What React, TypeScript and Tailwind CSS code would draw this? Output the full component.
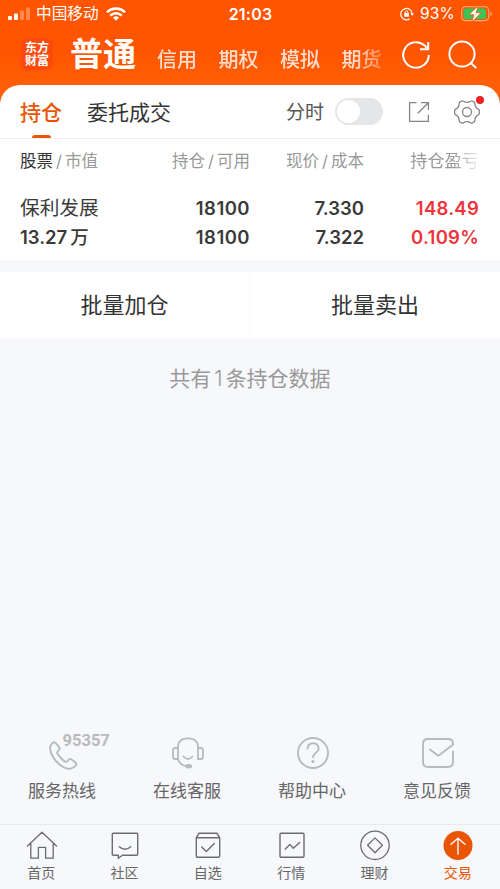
import React, { useState } from 'react';
import { clsx } from 'clsx';

interface IconProps {
  className?: string;
}

interface Holding {
  name: string;
  marketValue: string;
  unit: string;
  amount: string;
  available: string;
  price: string;
  cost: string;
  profit: string;
  profitRate: string;
}

const holdings: Holding[] = [
  {
    name: '保利发展',
    marketValue: '13.27',
    unit: '万',
    amount: '18100',
    available: '18100',
    price: '7.330',
    cost: '7.322',
    profit: '148.49',
    profitRate: '0.109%',
  },
];

const SignalIcon: React.FC<IconProps> = ({ className }) => (
  <svg className={className} viewBox="0 0 23 14" fill="#fff">
    <rect x="0" y="9" width="4" height="4" rx="1" />
    <rect x="6" y="6.500" width="4" height="6.500" rx="1" />
    <rect x="12" y="3.500" width="4" height="9.500" rx="1" opacity="0.3" />
    <rect x="18" y="0.500" width="4" height="12.500" rx="1" opacity="0.3" />
  </svg>
);

const WifiIcon: React.FC<IconProps> = ({ className }) => (
  <svg className={className} viewBox="0 0 20 14" fill="none" stroke="#fff" strokeWidth="2.6">
    <path d="M1 5.300a12.800 12.800 0 0 1 18 0" />
    <path d="M4.300 8.700a8 8 0 0 1 11.400 0" />
    <path d="M10 13.800l-3-3a4.300 4.300 0 0 1 6 0z" fill="#fff" stroke="none" />
  </svg>
);

const RotationLockIcon: React.FC<IconProps> = ({ className }) => (
  <svg className={className} viewBox="0 0 14 14" fill="none" stroke="#fff" strokeWidth="1.2">
    <path d="M9.800 11.800A5.700 5.700 0 1 1 12.200 7" />
    <path d="M10.300 6.300h3.600l-1.800 2.600z" fill="#fff" stroke="none" />
    <rect x="4.300" y="6" width="4.600" height="3.800" rx="0.6" fill="#fff" stroke="none" />
    <path d="M5.300 6.400V5.200a1.300 1.300 0 0 1 2.600 0v1.200" strokeWidth="1" />
  </svg>
);

const BatteryIcon: React.FC<IconProps> = ({ className }) => (
  <svg className={className} viewBox="0 0 32 18">
    <rect x="0.700" y="1.700" width="27" height="14" rx="4" fill="none" stroke="#fff" strokeOpacity="0.45" strokeWidth="1.2" />
    <path d="M29.300 6.500c2 .8 2 3.700 0 4.500z" fill="#fff" fillOpacity="0.5" />
    <rect x="2.500" y="3.500" width="22.500" height="10.500" rx="2.300" fill="#35c759" />
    <path d="M17.300.5L8 9.700h5L10.800 17.300l9.300-9.500h-5z" fill="#fff" stroke="#ff5a00" strokeWidth="0.8" />
  </svg>
);

const RefreshIcon: React.FC<IconProps> = ({ className }) => (
  <svg className={className} viewBox="0 0 30 30" fill="none" stroke="#fff" strokeWidth="2">
    <path d="M27.800 15a12.800 12.800 0 1 1-4.200-9.500l3 3" />
    <path d="M27.200 2v7.300h-8.200" />
  </svg>
);

const SearchIcon: React.FC<IconProps> = ({ className }) => (
  <svg className={className} viewBox="0 0 30 30" fill="none" stroke="#fff" strokeWidth="2">
    <circle cx="14" cy="14" r="12.600" />
    <path d="M22.800 23l5.400 5" />
  </svg>
);

const ShareIcon: React.FC<IconProps> = ({ className }) => (
  <svg className={className} viewBox="0 0 22 22" fill="none" stroke="#858585" strokeWidth="1.300">
    <path d="M8.500 1.600H1.600v18.800h18.800v-7" />
    <path d="M9.800 12.200L20.300 1.700M13 1.600h7.400v7.400" />
  </svg>
);

const GearIcon: React.FC<IconProps> = ({ className }) => (
  <svg className={className} viewBox="0 0 26 26" fill="none" stroke="#858585" strokeWidth="1.300" strokeLinejoin="round">
    <path d="M7.600 2q1-.5 1.800.2 1.600 1.100 3.600 1.100t3.600-1.100q.8-.7 1.800-.2l1.500.9q.9.600.9 1.600.1 1.900 1 3.400t2.500 2.300q1 .5 1 1.500v2.600q0 1-1 1.500-1.600.8-2.500 2.300t-1 3.400q0 1-.9 1.600l-1.500.9q-1 .5-1.800-.2-1.600-1.100-3.600-1.100t-3.600 1.100q-.8.7-1.800.2l-1.500-.9q-.9-.6-.9-1.600-.1-1.900-1-3.400t-2.500-2.300q-1-.5-1-1.500v-2.600q0-1 1-1.500 1.600-.8 2.500-2.300t1-3.400q0-1 .9-1.600z" />
    <circle cx="13" cy="13" r="4.500" />
  </svg>
);

const PhoneIcon: React.FC<IconProps> = ({ className }) => (
  <svg className={className} viewBox="0 0 36 36" fill="none" stroke="#b9babc" strokeWidth="1.900" strokeLinejoin="round">
    <path d="M9.300 7.200c-1.700-.1-4.300 3.300-4.200 5.700C5.600 22 14.500 32.300 23.400 33.800c3.300.4 7.900-2.800 8.300-4.700.1-.6-5.400-5.300-6.500-5.300-1.400 0-2.900 3.400-4.200 3.100-2.500-.6-8.300-6.800-8.900-9.100-.3-1.300 2.700-3 2.600-4.300-.1-1.300-4.500-6.300-5.400-6.300z" />
  </svg>
);

const ServiceIcon: React.FC<IconProps> = ({ className }) => (
  <svg className={className} viewBox="0 0 36 36" fill="none" stroke="#b9babc" strokeWidth="1.800" strokeLinecap="round" strokeLinejoin="round">
    <path d="M8 24V12.500Q8 3.400 18 3.400t10 9.100V24" />
    <path d="M7.800 13H5.300Q3 13 3 15.300v6.400Q3 24 5.300 24h2.500M28.200 13h2.500q2.300 0 2.300 2.300v6.400q0 2.300-2.300 2.300h-2.500" />
    <path d="M8 24q1.500 5.500 7.500 7" />
    <path d="M13.500 21.500q4.500 5 9 0" />
    <ellipse cx="18.700" cy="31.300" rx="2.500" ry="1.300" fill="#b9babc" />
  </svg>
);

const HelpIcon: React.FC<IconProps> = ({ className }) => (
  <svg className={className} viewBox="0 0 36 36" fill="none" stroke="#b9babc" strokeWidth="1.900">
    <circle cx="18" cy="18" r="15" />
    <path d="M12.500 13.700q.4-5.500 5.600-5.500t5.500 5.200q0 2.600-2.900 4.600-2.600 1.800-2.600 4.300" strokeLinecap="round" />
    <circle cx="17.900" cy="26.500" r="1.600" fill="#b9babc" stroke="none" />
  </svg>
);

const FeedbackIcon: React.FC<IconProps> = ({ className }) => (
  <svg className={className} viewBox="0 0 36 36" fill="none" stroke="#b9babc" strokeWidth="1.900" strokeLinecap="round" strokeLinejoin="round">
    <path d="M33 16.500V27q0 5-5 5H8q-5 0-5-5V9q0-5 5-5h20q5 0 5 4.500v1.300L18.300 20.700 10 14.500" />
  </svg>
);

const HomeIcon: React.FC<IconProps> = ({ className }) => (
  <svg className={className} viewBox="0 0 32 32" fill="none" stroke="#6c6c6e" strokeWidth="1.300" strokeLinejoin="round" strokeLinecap="round">
    <path d="M1.500 16L16 2.300 30.500 16M4.800 13.500v14.700h7.600V17.300h7.200v10.900h7.600V13.500" />
  </svg>
);

const CommunityIcon: React.FC<IconProps> = ({ className }) => (
  <svg className={className} viewBox="0 0 32 32" fill="none" stroke="#6c6c6e" strokeWidth="1.400" strokeLinejoin="round" strokeLinecap="round">
    <path d="M4.300 3.300h23.400q1 0 1 1v20q0 1-1 1H13.500l-4.200 3v-3h-5q-1 0-1-1v-20q0-1 1-1z" />
    <path d="M10.300 16.800q5.700 5 11.400 0" />
  </svg>
);

const WatchlistIcon: React.FC<IconProps> = ({ className }) => (
  <svg className={className} viewBox="0 0 32 32" fill="none" stroke="#6c6c6e" strokeWidth="1.400" strokeLinejoin="round" strokeLinecap="round">
    <path d="M4.300 7.700L7 3.300h18l2.700 4.400M4.300 7.700h23.400V26q0 1.300-1.300 1.300H5.600Q4.300 27.300 4.300 26z" />
    <path d="M9.700 17l4.600 4.600 8-8.200" />
  </svg>
);

const MarketIcon: React.FC<IconProps> = ({ className }) => (
  <svg className={className} viewBox="0 0 32 32" fill="none" stroke="#6c6c6e" strokeWidth="1.400" strokeLinejoin="round" strokeLinecap="round">
    <rect x="4" y="3.300" width="24" height="24" rx="1" />
    <path d="M9.300 19l4.600-4.600 3.400 3.800 6.300-5.700" />
  </svg>
);

const WealthIcon: React.FC<IconProps> = ({ className }) => (
  <svg className={className} viewBox="0 0 32 32" fill="none" stroke="#6c6c6e" strokeWidth="1.300" strokeLinejoin="round">
    <circle cx="16" cy="15.300" r="14.200" />
    <path d="M16 7.900l7.400 7.400-7.400 7.400-7.400-7.400z" />
  </svg>
);

const TradeIcon: React.FC<IconProps> = ({ className }) => (
  <svg className={className} viewBox="0 0 32 32" fill="none" stroke="#fff" strokeWidth="1.400" strokeLinecap="round" strokeLinejoin="round">
    <circle cx="16" cy="15.600" r="14.500" fill="#ea5504" stroke="none" />
    <path d="M16 24V8.300M9 14.300l7-6 7 6" />
  </svg>
);

const services = [
  { label: '服务热线', icon: PhoneIcon, badge: '95357' },
  { label: '在线客服', icon: ServiceIcon },
  { label: '帮助中心', icon: HelpIcon },
  { label: '意见反馈', icon: FeedbackIcon },
];

const navItems = [
  { label: '首页', icon: HomeIcon },
  { label: '社区', icon: CommunityIcon },
  { label: '自选', icon: WatchlistIcon },
  { label: '行情', icon: MarketIcon },
  { label: '理财', icon: WealthIcon },
  { label: '交易', icon: TradeIcon },
];

const StatusBar = () => (
  <div className="grid h-7 grid-cols-[1fr_auto_1fr] items-center pl-2 pr-[7px] text-white">
    <div className="flex h-7 items-center">
      <SignalIcon className="h-3.5 w-[23px]" />
      <span className="ml-[5px] text-[15.700px] leading-7">中国移动</span>
      <WifiIcon className="ml-[7px] h-3.5 w-5" />
    </div>
    <span className="text-[16px] font-semibold leading-7 tracking-[0.200px]">21:03</span>
    <div className="flex items-center justify-end">
      <RotationLockIcon className="h-3.5 w-3.5" />
      <span className="ml-1.5 text-[15.500px] leading-7 tracking-[0.200px]">93%</span>
      <BatteryIcon className="ml-1.5 h-[18px] w-8" />
    </div>
  </div>
);

const Header = () => (
  <header className="flex h-[57px] text-white">
    <div className="ml-[21px] mt-2.5 flex h-8 w-8 flex-col items-center justify-center rounded-md bg-[#fb4a0c] text-[12px] font-bold leading-[13px]">
      <span>东方</span>
      <span>财富</span>
    </div>
    <h1 className="ml-[17px] mt-1 w-[87px] whitespace-nowrap text-[33px] font-bold leading-[44px]">普通</h1>
    <nav className="mt-[18px] flex h-7 w-[227px] gap-[21.500px] overflow-hidden whitespace-nowrap text-[20px] font-medium leading-7 text-white/80 [mask-image:linear-gradient(to_right,#000_88%,rgba(0,0,0,0.3))]">
      <span>信用</span>
      <span>期权</span>
      <span>模拟</span>
      <span>期货</span>
    </nav>
    <RefreshIcon className="ml-[17px] mt-3 h-[30px] w-[30px] shrink-0" />
    <SearchIcon className="ml-[17px] mt-3 h-[30px] w-[30px] shrink-0" />
  </header>
);

const PositionTabs = () => {
  const [intraday, setIntraday] = useState(false);

  return (
    <div className="flex h-[54px] items-center border-b border-[#efefef] pl-5 pr-[22px]">
      <div className="flex h-full w-[42px] flex-col items-center justify-between">
        <span className="mt-[13px] whitespace-nowrap text-[21px] font-medium leading-[30px] text-[#ea5504]">持仓</span>
        <span className="h-[3px] w-[19px] rounded-t-sm bg-[#ea5504]" />
      </div>
      <span className="ml-[25px] pt-[3px] text-[21px] leading-[30px] text-[#333]">委托成交</span>
      <div className="ml-auto flex items-center">
        <span className="pt-[3px] text-[19px] leading-[30px] text-[#555]">分时</span>
        <button
          type="button"
          onClick={() => setIntraday(!intraday)}
          className={clsx(
            'ml-[11px] flex h-[27px] w-12 items-center rounded-full p-0.5',
            intraday ? 'justify-end bg-[#ea5504]' : 'bg-[#e4e6e8]'
          )}
        >
          <span className="h-[23px] w-[23px] rounded-full bg-white" />
        </button>
        <ShareIcon className="ml-[25px] h-[22px] w-[22px]" />
        <div className="relative ml-6 -mr-0.5">
          <GearIcon className="h-[26px] w-[26px]" />
          <span className="absolute -right-1 -top-[3px] h-2 w-2 rounded-full bg-[#ee2127]" />
        </div>
      </div>
    </div>
  );
};

const columns = 'grid grid-cols-[110px_120px_114px_115px] pl-5';

const HoldingsTable = () => (
  <div>
    <div className={clsx(columns, 'h-[43px] items-center whitespace-nowrap text-right text-[16.500px] leading-6 text-[#999]')}>
      <div className="text-left">
        <span className="text-[#333]">股票</span>
        <span className="px-[3px]">/</span>市值
      </div>
      <div>
        持仓<span className="px-[3px]">/</span>可用
      </div>
      <div>
        现价<span className="px-[3px]">/</span>成本
      </div>
      <div className="text-[17.200px] [mask-image:linear-gradient(to_right,#000_78%,rgba(0,0,0,0.15))]">持仓盈亏</div>
    </div>
    {holdings.map((item) => (
      <div key={item.name} className={clsx(columns, 'h-[78px] whitespace-nowrap pt-3 text-right text-[18.500px] font-semibold leading-[28.500px] text-[#3a3a3a]')}>
        <div className="flex flex-col text-left">
          <span className="h-[28.500px] text-[19.700px] font-normal">{item.name}</span>
          <span className="flex h-[28px] gap-[3px]">
            {item.marketValue}
            <span className="font-medium">{item.unit}</span>
          </span>
        </div>
        <div className="flex flex-col tracking-[0.450px]">
          <span>{item.amount}</span>
          <span>{item.available}</span>
        </div>
        <div className="flex flex-col">
          <span>{item.price}</span>
          <span>{item.cost}</span>
        </div>
        <div className="flex flex-col tracking-[0.250px] text-[#f0333a]">
          <span>{item.profit}</span>
          <span>{item.profitRate}</span>
        </div>
      </div>
    ))}
  </div>
);

const App: React.FC = () => {
  return (
    <div className="flex h-[889px] w-[500px] flex-col overflow-hidden bg-[#f7f8fb] font-[Inter,'Noto_Sans_CJK_SC',sans-serif]">
      <div className="bg-linear-to-b from-[#ff5500] from-20% to-[#ff6a12] to-50%">
        <StatusBar />
        <Header />
        <section className="h-[175px] rounded-t-[20px] bg-white">
          <PositionTabs />
          <HoldingsTable />
        </section>
      </div>

      <div className="mt-3 grid h-[67px] grid-cols-[249px_250px] gap-px text-center text-[22px] leading-[67px] text-[#333]">
        <button type="button" className="bg-white">批量加仓</button>
        <button type="button" className="bg-white">批量卖出</button>
      </div>

      <p className="mt-[25px] text-center text-[21px] leading-[30px] text-[#999]">
        共有<span className="px-[3px] font-light">1</span>条持仓数据
      </p>

      <div className="mt-auto grid h-[89px] grid-cols-4">
        {services.map(({ label, icon: Icon, badge }) => (
          <div key={label} className="flex flex-col items-center">
            <div className="relative">
              <Icon className="h-9 w-9" />
              {badge && (
                <span className="absolute left-[18px] top-[-2px] font-[Roboto] text-[16.500px] font-bold leading-4 text-[#b9babc]">{badge}</span>
              )}
            </div>
            <span className="mt-2 -ml-px text-[17px] leading-6 text-[#666]">{label}</span>
          </div>
        ))}
      </div>

      <nav className="grid h-[65px] grid-cols-6 border-t border-[#e8e9eb]">
        {navItems.map(({ label, icon: Icon }) => (
          <div key={label} className="flex flex-col items-center pt-[5px]">
            <Icon className="h-8 w-8" />
            <span className={clsx('mt-px -ml-px text-[14px] leading-5', label === '交易' ? 'text-[#ea5504]' : 'text-[#666]')}>{label}</span>
          </div>
        ))}
      </nav>
    </div>
  );
};

export default App;
